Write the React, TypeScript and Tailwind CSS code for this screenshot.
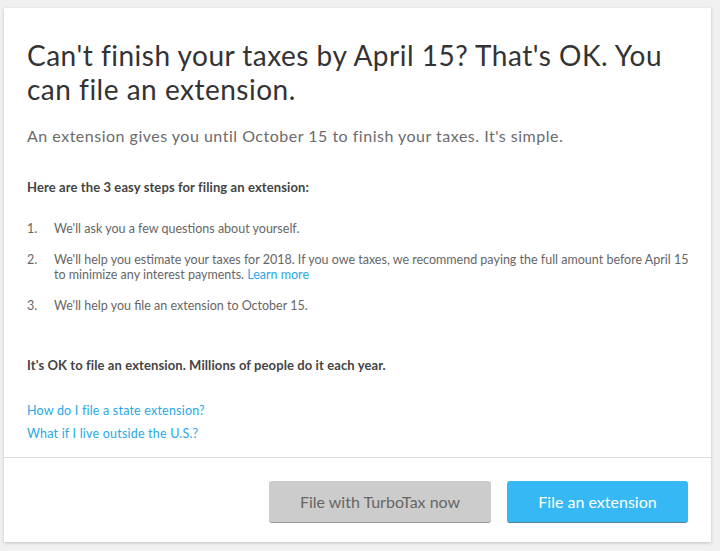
const steps = [
  { n: "1.", text: "We'll ask you a few questions about yourself.", link: false },
  {
    n: "2.",
    text: "We'll help you estimate your taxes for 2018. If you owe taxes, we recommend paying the full amount before April 15 to minimize any interest payments.",
    link: true,
  },
  { n: "3.", text: "We'll help you file an extension to October 15.", link: false },
];

export default function App() {
  return (
    <div className="min-h-[551px] bg-[#f0f0f0] pl-[4px] pr-[9px] pt-[8px] pb-[9px] font-['Lato',sans-serif]">
      <div className="bg-white shadow-[0_1px_3px_rgba(0,0,0,0.2)]">
        {/* Body */}
        <div className="pl-[23px] pr-[18px] pt-[30px] pb-[15px]">
          <h1 className="text-[28px] leading-[34px] tracking-[0.5px] text-[#333333] font-normal">
            Can't finish your taxes by April 15? That's OK. You can file an extension.
          </h1>
          <p className="mt-[19px] text-[16px] leading-[22px] tracking-[0.5px] text-[#6b6b6b]">
            An extension gives you until October 15 to finish your taxes. It's simple.
          </p>

          <p className="mt-[32px] text-[13px] leading-[16px] tracking-[0.1px] font-bold text-[#444444]">
            Here are the 3 easy steps for filing an extension:
          </p>

          <ol className="mt-[26px] flex flex-col gap-[16px] text-[12.5px] leading-[15px] text-[#666666]">
            {steps.map((s) => (
              <li key={s.n} className="flex">
                <span className="w-[27px] shrink-0">{s.n}</span>
                <span>
                  {s.text}
                  {s.link && (
                    <>
                      {" "}
                      <a className="text-[#27a8e6]" href="#">
                        Learn more
                      </a>
                    </>
                  )}
                </span>
              </li>
            ))}
          </ol>

          <p className="mt-[44px] text-[13px] leading-[16px] tracking-[0.1px] font-bold text-[#444444]">
            It's OK to file an extension. Millions of people do it each year.
          </p>

          <div className="mt-[30px] flex flex-col gap-[7px] text-[12.5px] leading-[16px] tracking-[0.2px]">
            <a className="text-[#27a8e6]" href="#">
              How do I file a state extension?
            </a>
            <a className="text-[#27a8e6]" href="#">
              What if I live outside the U.S.?
            </a>
          </div>
        </div>

        {/* Footer */}
        <div className="border-t border-[#dddddd] flex justify-end gap-[16px] px-[23px] pt-[23px] pb-[19px]">
          <button className="w-[222px] h-[42px] rounded-[3px] bg-[#cccccc] border-b border-[#999999] text-[16px] text-[#666666]">
            File with TurboTax now
          </button>
          <button className="w-[181px] h-[42px] rounded-[3px] bg-[#36b8f5] border-b border-[#5a7f95] text-[16px] text-white">
            File an extension
          </button>
        </div>
      </div>
    </div>
  );
}
